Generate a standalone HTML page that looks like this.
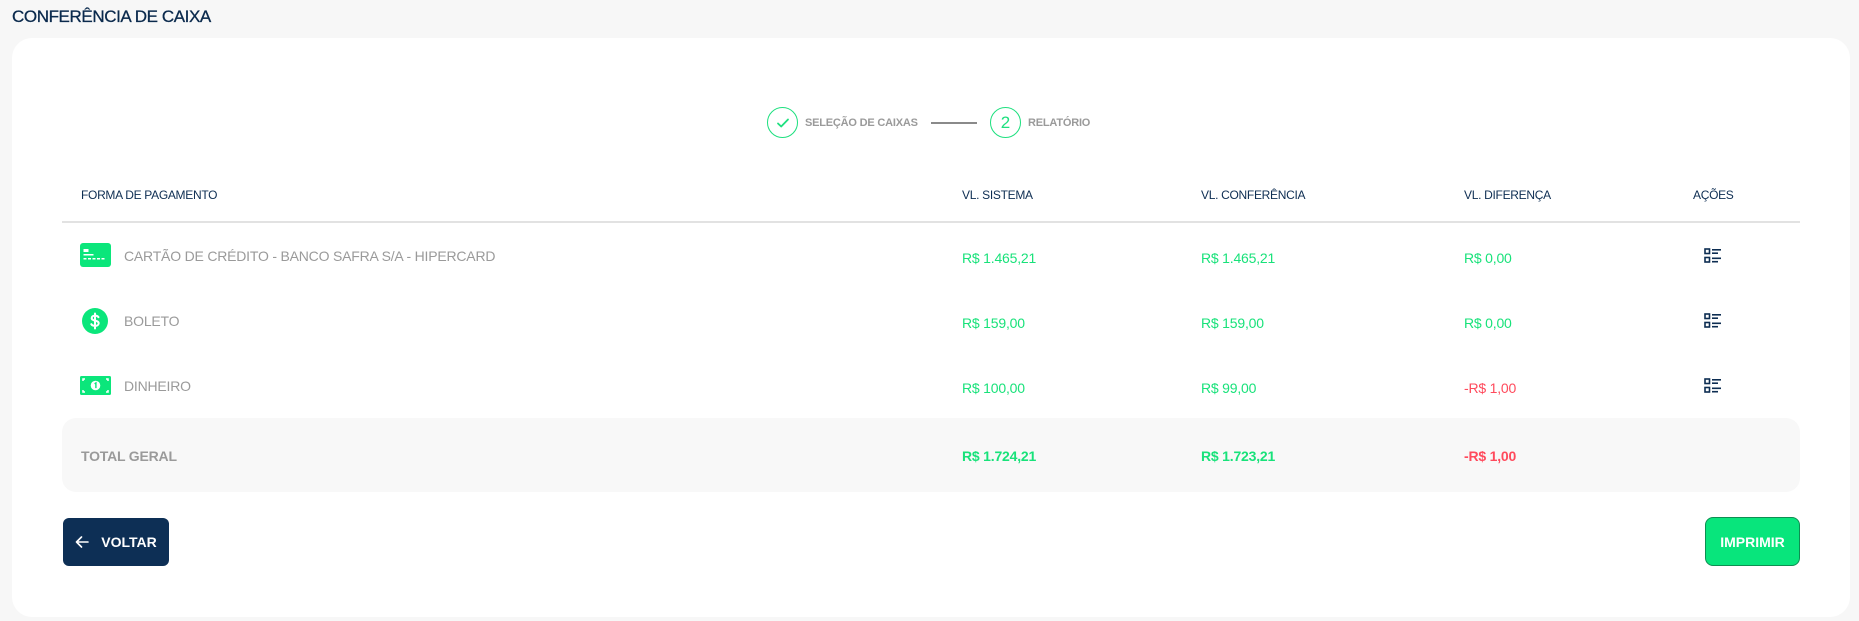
<!DOCTYPE html>
<html><head><meta charset="utf-8"><style>
*{margin:0;padding:0;box-sizing:border-box}
body{width:1859px;height:621px;background:#f7f7f7;font-family:"Liberation Sans",Arial,sans-serif;position:relative;overflow:hidden}
.a{position:absolute;white-space:nowrap}
.title{left:12px;top:6px;font-size:17px;color:#0b2a4d;line-height:22px;letter-spacing:-0.4px;-webkit-text-stroke:0.3px #0b2a4d}
.card{left:12px;top:38px;width:1838px;height:579px;background:#fff;border-radius:20px}
.circ{width:31px;height:31px;border:1.3px solid #1ee07f;border-radius:50%;display:flex;align-items:center;justify-content:center;color:#1ee07f;font-size:17px}
.step{font-size:11px;font-weight:bold;color:#9a9a9a;line-height:14px;top:116px;letter-spacing:-0.2px}
.th{font-size:12px;color:#0d2d52;top:188px;line-height:14px;letter-spacing:-0.3px}
.td{font-size:14px;line-height:18px;color:#9a9a9a;letter-spacing:-0.2px}
.g{color:#18e27a}.r{color:#ff4a5c}
.b{font-weight:bold}
</style></head><body>
<div class="a title">CONFERÊNCIA DE CAIXA</div>
<div class="a card"></div>

<div class="a circ" style="left:767px;top:107px"><svg width="14" height="12" viewBox="0 0 14 12"><path d="M2 6.5l3.2 3L12 2.5" fill="none" stroke="#1ee07f" stroke-width="1.8" stroke-linecap="round" stroke-linejoin="round"/></svg></div>
<div class="a step" style="left:805px">SELEÇÃO DE CAIXAS</div>
<div class="a" style="left:931px;top:122px;width:46px;height:1.5px;background:#8a8a8a"></div>
<div class="a circ" style="left:990px;top:107px">2</div>
<div class="a step" style="left:1028px">RELATÓRIO</div>

<div class="a th" style="left:81px">FORMA DE PAGAMENTO</div>
<div class="a th" style="left:962px">VL. SISTEMA</div>
<div class="a th" style="left:1201px">VL. CONFERÊNCIA</div>
<div class="a th" style="left:1464px">VL. DIFERENÇA</div>
<div class="a th" style="left:1693px">AÇÕES</div>
<div class="a" style="left:62px;top:221px;width:1738px;height:1.5px;background:#e2e2e2"></div>

<svg class="a" style="left:80px;top:243px" width="31" height="24" viewBox="0 0 31 24"><rect width="31" height="24" rx="3" fill="#0be67b"/><rect x="3.5" y="6" width="5" height="3" fill="#fff"/><rect x="3.5" y="11" width="10" height="1.5" fill="#fff"/><g fill="#fff"><rect x="3.5" y="15" width="3" height="1.5"/><rect x="8" y="15" width="3" height="1.5"/><rect x="12.5" y="15" width="3" height="1.5"/><rect x="17" y="15" width="3" height="1.5"/><rect x="21.5" y="15" width="3" height="1.5"/></g></svg>
<svg class="a" style="left:82px;top:308px" width="26" height="26" viewBox="0 0 26 26"><circle cx="13" cy="13" r="13" fill="#0be67b"/><path d="M16.5 9.2c-.6-1-1.9-1.6-3.5-1.6-2 0-3.3 1-3.3 2.5 0 3.3 7 1.8 7 5.2 0 1.5-1.5 2.6-3.7 2.6-1.6 0-3-.6-3.7-1.7M13 5.5v15" fill="none" stroke="#fff" stroke-width="2" stroke-linecap="round"/></svg>
<svg class="a" style="left:80px;top:376px" width="31" height="19" viewBox="0 0 31 19"><rect width="31" height="19" rx="1.5" fill="#0be67b"/><g stroke="#fff" stroke-width="1.5" fill="none"><path d="M3 5V3h2M26 3h2v2M3 14v2h2M26 16h2v-2"/></g><circle cx="15.5" cy="9.5" r="4.8" fill="#fff"/><path d="M14.6 7.8l1.3-.9v5.2" stroke="#0be67b" stroke-width="1.4" fill="none"/></svg>

<div class="a td" style="left:124px;top:247px">CARTÃO DE CRÉDITO - BANCO SAFRA S/A - HIPERCARD</div>
<div class="a td" style="left:124px;top:312px">BOLETO</div>
<div class="a td" style="left:124px;top:377px">DINHEIRO</div>

<div class="a td g" style="left:962px;top:249px">R$ 1.465,21</div>
<div class="a td g" style="left:1201px;top:249px">R$ 1.465,21</div>
<div class="a td g" style="left:1464px;top:249px">R$ 0,00</div>
<div class="a td g" style="left:962px;top:314px">R$ 159,00</div>
<div class="a td g" style="left:1201px;top:314px">R$ 159,00</div>
<div class="a td g" style="left:1464px;top:314px">R$ 0,00</div>
<div class="a td g" style="left:962px;top:379px">R$ 100,00</div>
<div class="a td g" style="left:1201px;top:379px">R$ 99,00</div>
<div class="a td r" style="left:1464px;top:379px">-R$ 1,00</div>

<svg class="a" style="left:1704px;top:248px" width="18" height="16" viewBox="0 0 18 16"><g fill="none" stroke="#0d2d52" stroke-width="1.6"><rect x="1" y="1" width="4.5" height="4.5"/><rect x="1" y="9.5" width="4.5" height="4.5"/></g><g fill="#0d2d52"><rect x="8" y="1" width="9" height="1.6"/><rect x="8" y="4.4" width="6" height="1.6"/><rect x="8" y="9.5" width="9" height="1.6"/><rect x="8" y="12.9" width="6" height="1.6"/></g></svg>
<svg class="a" style="left:1704px;top:313px" width="18" height="16" viewBox="0 0 18 16"><g fill="none" stroke="#0d2d52" stroke-width="1.6"><rect x="1" y="1" width="4.5" height="4.5"/><rect x="1" y="9.5" width="4.5" height="4.5"/></g><g fill="#0d2d52"><rect x="8" y="1" width="9" height="1.6"/><rect x="8" y="4.4" width="6" height="1.6"/><rect x="8" y="9.5" width="9" height="1.6"/><rect x="8" y="12.9" width="6" height="1.6"/></g></svg>
<svg class="a" style="left:1704px;top:378px" width="18" height="16" viewBox="0 0 18 16"><g fill="none" stroke="#0d2d52" stroke-width="1.6"><rect x="1" y="1" width="4.5" height="4.5"/><rect x="1" y="9.5" width="4.5" height="4.5"/></g><g fill="#0d2d52"><rect x="8" y="1" width="9" height="1.6"/><rect x="8" y="4.4" width="6" height="1.6"/><rect x="8" y="9.5" width="9" height="1.6"/><rect x="8" y="12.9" width="6" height="1.6"/></g></svg>

<div class="a" style="left:62px;top:418px;width:1738px;height:74px;background:#f8f8f8;border-radius:14px"></div>
<div class="a td b" style="left:81px;top:447px">TOTAL GERAL</div>
<div class="a td g b" style="left:962px;top:447px">R$ 1.724,21</div>
<div class="a td g b" style="left:1201px;top:447px">R$ 1.723,21</div>
<div class="a td r b" style="left:1464px;top:447px">-R$ 1,00</div>

<div class="a" style="left:63px;top:518px;width:106px;height:48px;background:#0d2f55;border-radius:6px;color:#fff;font-weight:bold;font-size:14px;display:flex;align-items:center;justify-content:center;gap:12px"><svg width="14" height="12" viewBox="0 0 14 12"><path d="M13 6H1.5M6.5 1L1.5 6l5 5" fill="none" stroke="#fff" stroke-width="1.6" stroke-linecap="round" stroke-linejoin="round"/></svg>VOLTAR</div>
<div class="a" style="left:1705px;top:517px;width:95px;height:49px;background:#08e57c;border:1px solid #0d8f52;border-radius:8px;color:#fff;font-weight:bold;font-size:14px;display:flex;align-items:center;justify-content:center">IMPRIMIR</div>
</body></html>
